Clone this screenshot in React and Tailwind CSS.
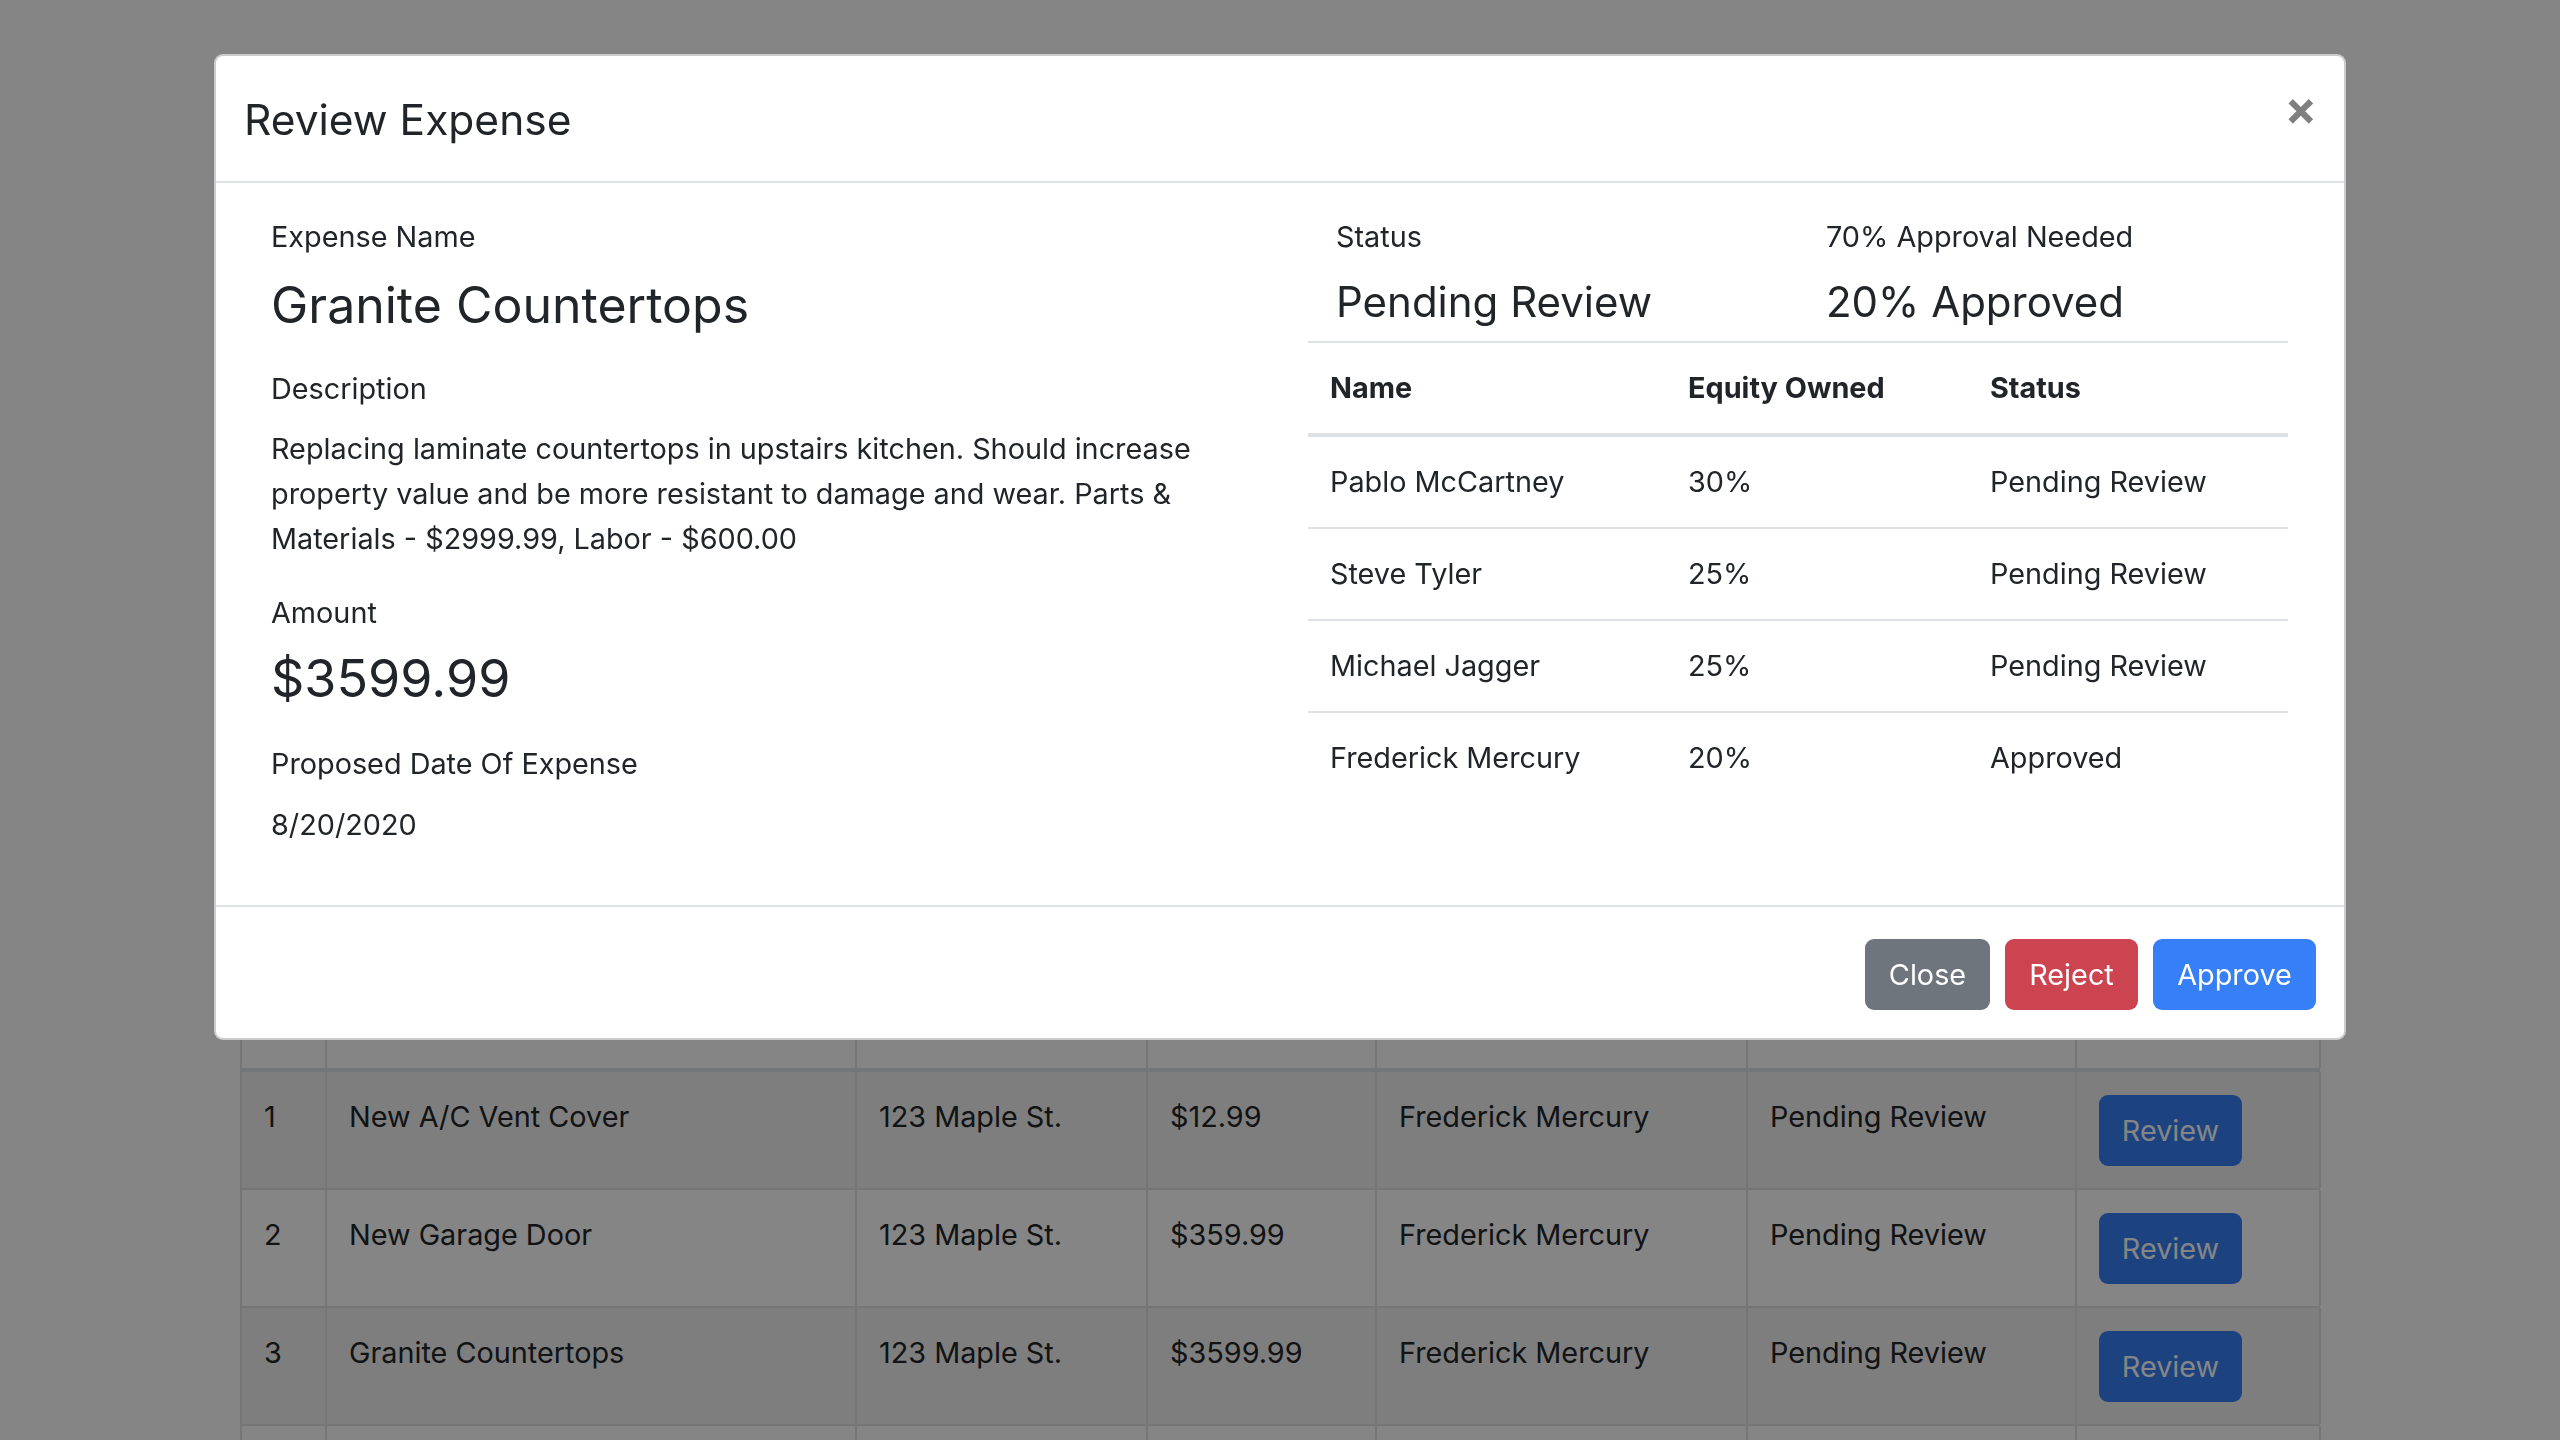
import React from 'react';

const owners = [
  { name: 'Pablo McCartney', equity: '30%', status: 'Pending Review' },
  { name: 'Steve Tyler', equity: '25%', status: 'Pending Review' },
  { name: 'Michael Jagger', equity: '25%', status: 'Pending Review' },
  { name: 'Frederick Mercury', equity: '20%', status: 'Approved' },
];

const expenses = [
  { id: 1, name: 'New A/C Vent Cover', property: '123 Maple St.', amount: '$12.99', by: 'Frederick Mercury', status: 'Pending Review' },
  { id: 2, name: 'New Garage Door', property: '123 Maple St.', amount: '$359.99', by: 'Frederick Mercury', status: 'Pending Review' },
  { id: 3, name: 'Granite Countertops', property: '123 Maple St.', amount: '$3599.99', by: 'Frederick Mercury', status: 'Pending Review' },
];

const bgCols = 'grid grid-cols-[85px_530px_291px_229px_371px_329px_246px]';
const bgCell = 'border-l-2 border-[#dee2e6] px-[22px] pt-[22px]';

const ExpensesPage = () => {
  return (
    <main className="px-[240px] pt-[978px]">
      {/* Expenses table behind the modal */}
      <div className={`${bgCols} h-[94px] border-b-4 border-[#dee2e6] font-bold`}>
        <div className={`${bgCell} pt-[8px]`}>#</div>
        <div className={`${bgCell} pt-[8px]`}>Expense</div>
        <div className={`${bgCell} pt-[8px]`}>Property</div>
        <div className={`${bgCell} pt-[8px]`}>Amount</div>
        <div className={`${bgCell} pt-[8px]`}>Submitted By</div>
        <div className={`${bgCell} pt-[8px]`}>Status</div>
        <div className={`${bgCell} border-r-2 pt-[8px]`}></div>
      </div>
      {expenses.map((e, i) => (
        <div
          key={e.id}
          className={`${bgCols} h-[118px] border-b-2 border-[#dee2e6] ${i % 2 === 0 ? 'bg-[#f2f2f2]' : 'bg-white'}`}
        >
          <div className={bgCell}>{e.id}</div>
          <div className={bgCell}>{e.name}</div>
          <div className={bgCell}>{e.property}</div>
          <div className={bgCell}>{e.amount}</div>
          <div className={bgCell}>{e.by}</div>
          <div className={bgCell}>{e.status}</div>
          <div className={`${bgCell} border-r-2 pt-[23px]`}>
            <button className="w-[143px] h-[71px] rounded-[9px] bg-[#367ff6] text-white">Review</button>
          </div>
        </div>
      ))}
      {/* next row, cut off by the window */}
      <div className={`${bgCols} h-[118px]`}>
        <div className={bgCell}></div>
        <div className={bgCell}></div>
        <div className={bgCell}></div>
        <div className={bgCell}></div>
        <div className={bgCell}></div>
        <div className={bgCell}></div>
        <div className={`${bgCell} border-r-2`}></div>
      </div>
    </main>
  );
};

const ReviewModal = () => {
  return (
    <div className="fixed inset-0 overflow-hidden flex justify-center">
      <div className="mt-[54px] w-[2132px] h-fit bg-white border-2 border-black/20 rounded-[9px] text-[#212529]">
        {/* Header */}
        <div className="h-[127px] flex items-center justify-between pl-[28px] pr-[27px] pt-[3px] border-b-2 border-[#dee2e6]">
          <h4 className="text-[42.5px] leading-[54px] font-normal">Review Expense</h4>
          <button className="text-[48px] leading-none font-bold text-black/50 -mt-[24px]">×</button>
        </div>

        {/* Body */}
        <div className="grid grid-cols-2 gap-[57px] pl-[55px] pr-[56px] pt-[31px] pb-[58px]">
          <div>
            <div>Expense Name</div>
            <h3 className="mt-[16px] text-[50px] leading-[60px]">Granite Countertops</h3>
            <div className="mt-[31px]">Description</div>
            <p className="mt-[15px]">
              Replacing laminate countertops in upstairs kitchen. Should increase property value and be more resistant to damage and wear. Parts &amp; Materials - $2999.99, Labor - $600.00
            </p>
            <div className="mt-[29px]">Amount</div>
            <h3 className="mt-[14px] text-[52px] leading-[60px]">$3599.99</h3>
            <div className="mt-[32px]">Proposed Date Of Expense</div>
            <p className="mt-[16px]">8/20/2020</p>
          </div>

          <div>
            <div className="grid grid-cols-2">
              <div className="pl-[28px]">
                <div>Status</div>
                <h5 className="mt-[19px] text-[42px] leading-[48px]">Pending Review</h5>
              </div>
              <div className="pl-[28px]">
                <div>70% Approval Needed</div>
                <h5 className="mt-[19px] text-[42px] leading-[48px]">20% Approved</h5>
              </div>
            </div>
            <div className="mt-[15px] border-t-2 border-[#dee2e6]">
              <div className="grid grid-cols-[358px_302px_1fr] h-[94px] border-b-4 border-[#dee2e6] font-bold">
                <div className="px-[22px] pt-[22px]">Name</div>
                <div className="px-[22px] pt-[22px]">Equity Owned</div>
                <div className="px-[22px] pt-[22px]">Status</div>
              </div>
              {owners.map((o, i) => (
                <div
                  key={o.name}
                  className={`grid grid-cols-[358px_302px_1fr] h-[90px] box-content ${i > 0 ? 'border-t-2 border-[#dee2e6]' : ''}`}
                >
                  <div className="px-[22px] pt-[22px]">{o.name}</div>
                  <div className="px-[22px] pt-[22px]">{o.equity}</div>
                  <div className="px-[22px] pt-[22px]">{o.status}</div>
                </div>
              ))}
            </div>
          </div>
        </div>

        {/* Footer */}
        <div className="flex justify-end gap-[15px] border-t-2 border-[#dee2e6] pt-[32px] pb-[28px] pr-[28px]">
          <button className="w-[125px] h-[71px] rounded-[9px] bg-[#6e757d] text-white">Close</button>
          <button className="w-[133px] h-[71px] rounded-[9px] bg-[#cb444f] text-white">Reject</button>
          <button className="w-[163px] h-[71px] rounded-[9px] bg-[#367ff6] text-white">Approve</button>
        </div>
      </div>
    </div>
  );
};

export default function App() {
  return (
    <div
      className="relative h-[1440px] overflow-hidden bg-white text-[#212529] text-[28.8px] leading-[45px]"
      style={{ fontFamily: 'Inter, "Noto Sans", sans-serif' }}
    >
      <ExpensesPage />
      <div className="fixed inset-0 bg-black/[0.48]"></div>
      <ReviewModal />
    </div>
  );
}
